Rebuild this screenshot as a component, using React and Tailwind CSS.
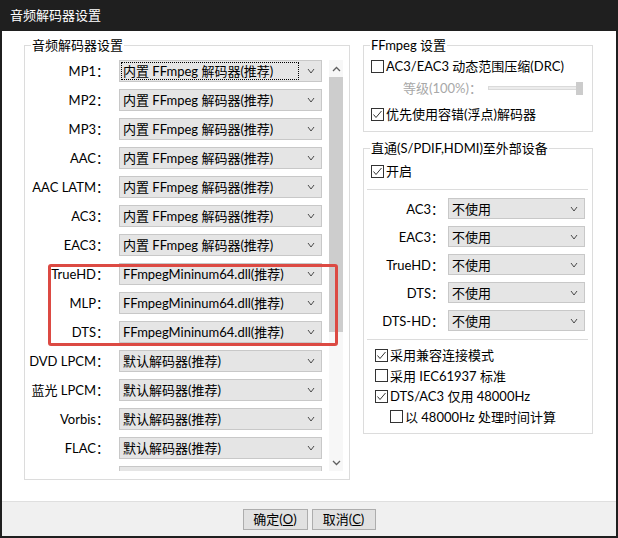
import React from 'react'

const FF = '内置 FFmpeg 解码器(推荐)'
const DLL = 'FFmpegMininum64.dll(推荐)'
const DEF = '默认解码器(推荐)'

const leftRows = [
  ['MP1', FF],
  ['MP2', FF],
  ['MP3', FF],
  ['AAC', FF],
  ['AAC LATM', FF],
  ['AC3', FF],
  ['EAC3', FF],
  ['TrueHD', DLL],
  ['MLP', DLL],
  ['DTS', DLL],
  ['DVD LPCM', DEF],
  ['蓝光 LPCM', DEF],
  ['Vorbis', DEF],
  ['FLAC', DEF],
  ['', ''],
]

const passRows = ['AC3', 'EAC3', 'TrueHD', 'DTS', 'DTS-HD']

function Chevron() {
  return (
    <svg width="8" height="6" viewBox="0 0 8 6" className="shrink-0">
      <path d="M1 1 L4 5 L7 1" fill="none" stroke="#4a4a4a" strokeWidth="1" />
    </svg>
  )
}

function Select({ value, className, focus }) {
  return (
    <div className={`relative flex shrink-0 items-center justify-between border border-[#c8c8c8] bg-[#e5e5e5] pl-[3px] pr-[6px] ${className}`}>
      <span className="whitespace-nowrap leading-[18px]">{value}</span>
      <Chevron />
      {focus && <div className="absolute left-[1px] top-[1px] bottom-[1px] right-[22px] border border-dotted border-black" />}
    </div>
  )
}

function Check({ checked }) {
  return (
    <span className="flex h-[13px] w-[13px] shrink-0 items-center justify-center border border-[#333] bg-white">
      {checked && (
        <svg width="11" height="11" viewBox="0 0 11 11">
          <path d="M1.5 5.5 L4 8.5 L9.5 2" fill="none" stroke="#333" strokeWidth="1" />
        </svg>
      )}
    </span>
  )
}

function CheckRow({ checked, label, className = '' }) {
  return (
    <div className={`flex h-[20px] items-center gap-[2px] ${className}`}>
      <Check checked={checked} />
      <span className="whitespace-nowrap leading-[18px]">{label}</span>
    </div>
  )
}

function Group({ title, className, children }) {
  return (
    <div className={`relative border border-[#dcdcdc] ${className}`}>
      <span className="absolute left-[6px] -top-[10px] bg-white px-[1px] leading-[18px] whitespace-nowrap">{title}</span>
      {children}
    </div>
  )
}

function Arrow({ up }) {
  return (
    <svg width="9" height="6" viewBox="0 0 9 6">
      <path d={up ? 'M1 5 L4.5 1.5 L8 5' : 'M1 1 L4.5 4.5 L8 1'} fill="none" stroke="#606060" strokeWidth="1.3" />
    </svg>
  )
}

export default function App() {
  return (
    <div className="flex h-[538px] w-[618px] flex-col bg-[#1f1f1f] text-[13px] text-black font-['Lato','Noto_Sans_CJK_SC',sans-serif]">
      <div className="flex h-[31px] shrink-0 items-center px-[10px] text-white">音频解码器设置</div>

      <div className="mx-[2px] mb-[2px] flex flex-1 flex-col bg-white">
        <div className="flex flex-1 gap-[13px] pl-[22px] pt-[14px]">
          {/* left group */}
          <Group title="音频解码器设置" className="flex h-[435px] w-[326px] shrink-0">
            <div className="flex h-[425px] flex-col gap-[7px] overflow-hidden pt-[14px]">
              {leftRows.map(([label, value], i) => (
                <div key={i} className="flex h-[22px] shrink-0 items-center gap-[10px]">
                  <span className="w-[84px] shrink-0 whitespace-nowrap text-right leading-[18px]">{label ? `${label}：` : ''}</span>
                  <Select value={value} className="h-[22px] w-[203px]" focus={i === 0} />
                </div>
              ))}
            </div>
            <div className="ml-[7px] mt-[14px] flex h-[411px] w-[14px] flex-col bg-[#f7f7f7]">
              <div className="flex h-[17px] shrink-0 items-center justify-center"><Arrow up /></div>
              <div className="h-[255px] w-full bg-[#cdcdcd]" />
              <div className="flex-1" />
              <div className="flex h-[17px] shrink-0 items-center justify-center"><Arrow /></div>
            </div>
            <div className="absolute left-[23px] top-[218px] h-[82px] w-[290px] rounded-[3px] border-[3px] border-[#dc4a43]" />
          </Group>

          {/* right column */}
          <div className="flex w-[230px] shrink-0 flex-col gap-[16px]">
            <Group title="FFmpeg 设置" className="h-[87px] px-[7px] pt-[10px]">
              <CheckRow checked={false} label="AC3/EAC3 动态范围压缩(DRC)" />
              <div className="mt-[2px] flex h-[20px] items-center">
                <span className="whitespace-nowrap pl-[32px] leading-[18px] text-[#a8a8a8]">等级(100%)：</span>
                <div className="relative ml-auto mr-[2px] flex h-[13px] w-[95px] items-center">
                  <div className="h-[4px] w-full border border-[#dadada] bg-[#ececec]" />
                  <div className="absolute right-0 top-0 h-[13px] w-[7px] bg-[#cccccc]" />
                </div>
              </div>
              <CheckRow checked label="优先使用容错(浮点)解码器" className="mt-[6px]" />
            </Group>

            <Group title="直通(S/PDIF,HDMI)至外部设备" className="flex h-[286px] flex-col pt-[12px]">
              <CheckRow checked label="开启" className="pl-[7px]" />
              <div className="ml-[3px] mr-[4px] mt-[8px] h-px bg-[#dcdcdc]" />
              <div className="mt-[8px] flex flex-col gap-[7px]">
                {passRows.map((label) => (
                  <div key={label} className="flex h-[21px] items-center gap-[4px]">
                    <span className="w-[80px] shrink-0 whitespace-nowrap text-right leading-[18px]">{label}：</span>
                    <Select value="不使用" className="h-[21px] w-[137px]" />
                  </div>
                ))}
              </div>
              <div className="ml-[3px] mr-[4px] mt-[8px] h-px bg-[#dcdcdc]" />
              <div className="mt-[5px] flex flex-col gap-[0.5px] pl-[11px]">
                <CheckRow checked label="采用兼容连接模式" />
                <CheckRow checked={false} label="采用 IEC61937 标准" />
                <CheckRow checked label="DTS/AC3 仅用 48000Hz" />
                <CheckRow checked={false} label="以 48000Hz 处理时间计算" className="pl-[15px]" />
              </div>
            </Group>
          </div>
        </div>

        <div className="flex h-[35px] shrink-0 items-center justify-center gap-[4px] border-t border-[#dfdfdf] bg-[#f0f0f0]">
          <button className="flex h-[21px] w-[65px] items-center justify-center border border-[#adadad] bg-[#e1e1e1] leading-[18px]">
            确定(<span className="underline">O</span>)
          </button>
          <button className="flex h-[21px] w-[64px] items-center justify-center border border-[#adadad] bg-[#e1e1e1] leading-[18px]">
            取消(<span className="underline">C</span>)
          </button>
        </div>
      </div>
    </div>
  )
}
